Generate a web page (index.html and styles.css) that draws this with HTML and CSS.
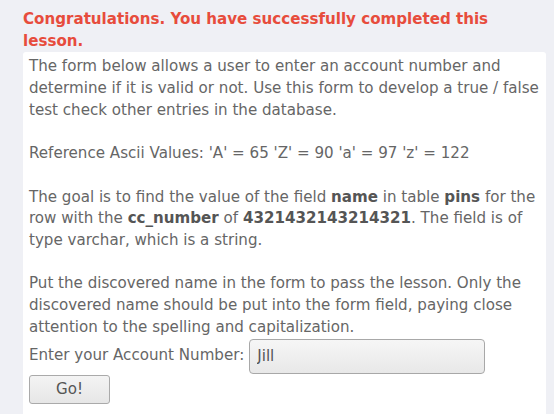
FILE: index.html
```html
<!DOCTYPE html>
<html>
<head>
<meta charset="utf-8">
<link rel="stylesheet" href="styles.css">
</head>
<body>
<div class="page">
  <div class="feedback">Congratulations. You have successfully completed this lesson.</div>
  <div class="panel">
    <p class="para">The form below allows a user to enter an account number and determine if it is valid or not. Use this form to develop a true / false test check other entries in the database.</p>
    <p class="para">Reference Ascii Values: 'A' = 65 'Z' = 90 'a' = 97 'z' = 122</p>
    <p class="para">The goal is to find the value of the field <b>name</b> in table <b>pins</b> for the row with the <b>cc_number</b> of <b>4321432143214321</b>. The field is of type varchar, which is a string.</p>
    <p class="para last">Put the discovered name in the form to pass the lesson. Only the discovered name should be put into the form field, paying close attention to the spelling and capitalization.</p>
    <form class="form">
      <div class="row">
        <label class="label">Enter your Account Number:</label>
        <input class="field" type="text" value="Jill">
      </div>
      <div class="row">
        <button class="btn" type="button">Go!</button>
      </div>
    </form>
  </div>
</div>
</body>
</html>
```

FILE: styles.css
```css
html, body {
  margin: 0;
  padding: 0;
  background: #eff0f5;
}
body {
  font-family: "DejaVu Sans", sans-serif;
  font-size: 15.1px;
  line-height: 21.7px;
  color: #666;
}
.page {
  padding: 9px 8px 0 23px;
}
.feedback {
  color: #e74c3c;
  font-weight: bold;
}
.panel {
  background: #fff;
  border-radius: 3px 3px 0 0;
  padding: 4px 0 10px 6px;
  width: 517px;
}
.para {
  margin: 0 0 21.7px 0;
}
.para.last {
  margin-bottom: 0;
}
.para b {
  color: #555;
}
.row {
  display: flex;
  align-items: center;
}
.label {
  margin-right: 5px;
}
.field {
  box-sizing: border-box;
  width: 236px;
  height: 35px;
  border: 1px solid #a8a8a8;
  border-radius: 4px;
  background: linear-gradient(#f6f6f6, #e8e8e8);
  font-family: "DejaVu Sans", sans-serif;
  font-size: 15.1px;
  color: #555;
  padding: 0 7px;
  margin: 0;
}
.btn {
  box-sizing: border-box;
  width: 81px;
  height: 29px;
  margin-top: 1px;
  border: 1px solid #aaa;
  border-radius: 3px;
  background: linear-gradient(#f4f4f4, #e6e6e6);
  font-family: "DejaVu Sans", sans-serif;
  font-size: 15.1px;
  color: #555;
  padding: 0;
}
```
